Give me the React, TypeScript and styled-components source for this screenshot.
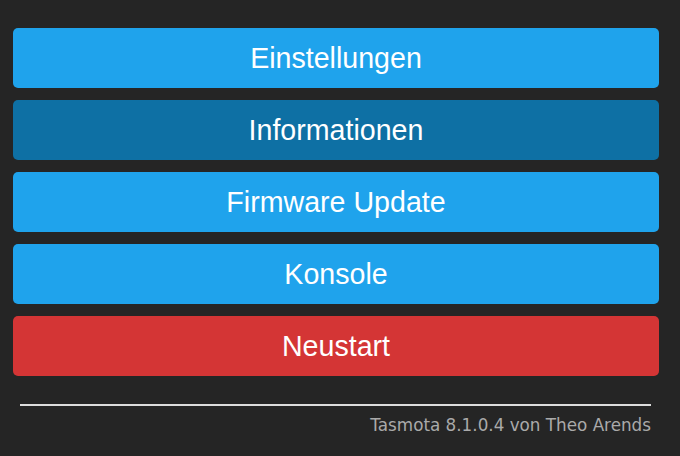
import React from "react";
import styled, { createGlobalStyle } from "styled-components";

const Global = createGlobalStyle`
  html, body { margin: 0; padding: 0; background: #252525; }
  body { width: 680px; height: 456px; overflow: hidden; }
`;

const Page = styled.div`
  padding: 28px 21px 0 13px;
  display: flex;
  flex-direction: column;
`;

const Menu = styled.div`
  display: flex;
  flex-direction: column;
  gap: 12px;
`;

const Button = styled.button<{ $variant?: "normal" | "active" | "danger" }>`
  display: block;
  width: 646px;
  height: 60px;
  border: 0;
  border-radius: 5px;
  padding: 0;
  color: #ffffff;
  font-family: "Liberation Sans", Arial, sans-serif;
  font-size: 28.6px;
  line-height: 60px;
  text-align: center;
  cursor: pointer;
  background: ${(p) =>
    p.$variant === "danger" ? "#d43535" : p.$variant === "active" ? "#0e70a4" : "#1fa3ec"};
`;

const Footer = styled.div`
  margin: 28px 8px 0 7px;
  display: flex;
  flex-direction: column;
`;

const Rule = styled.div`
  height: 2px;
  background: #dddddd;
`;

const Credit = styled.div`
  margin-top: 9px;
  text-align: right;
  color: #aaaaaa;
  font-family: "DejaVu Sans", Verdana, sans-serif;
  font-size: 16.8px;
  line-height: 20px;
`;

export default function App() {
  return (
    <>
      <Global />
      <Page>
        <Menu>
          <Button>Einstellungen</Button>
          <Button $variant="active">Informationen</Button>
          <Button>Firmware Update</Button>
          <Button>Konsole</Button>
          <Button $variant="danger">Neustart</Button>
        </Menu>
        <Footer>
          <Rule />
          <Credit>Tasmota 8.1.0.4 von Theo Arends</Credit>
        </Footer>
      </Page>
    </>
  );
}
